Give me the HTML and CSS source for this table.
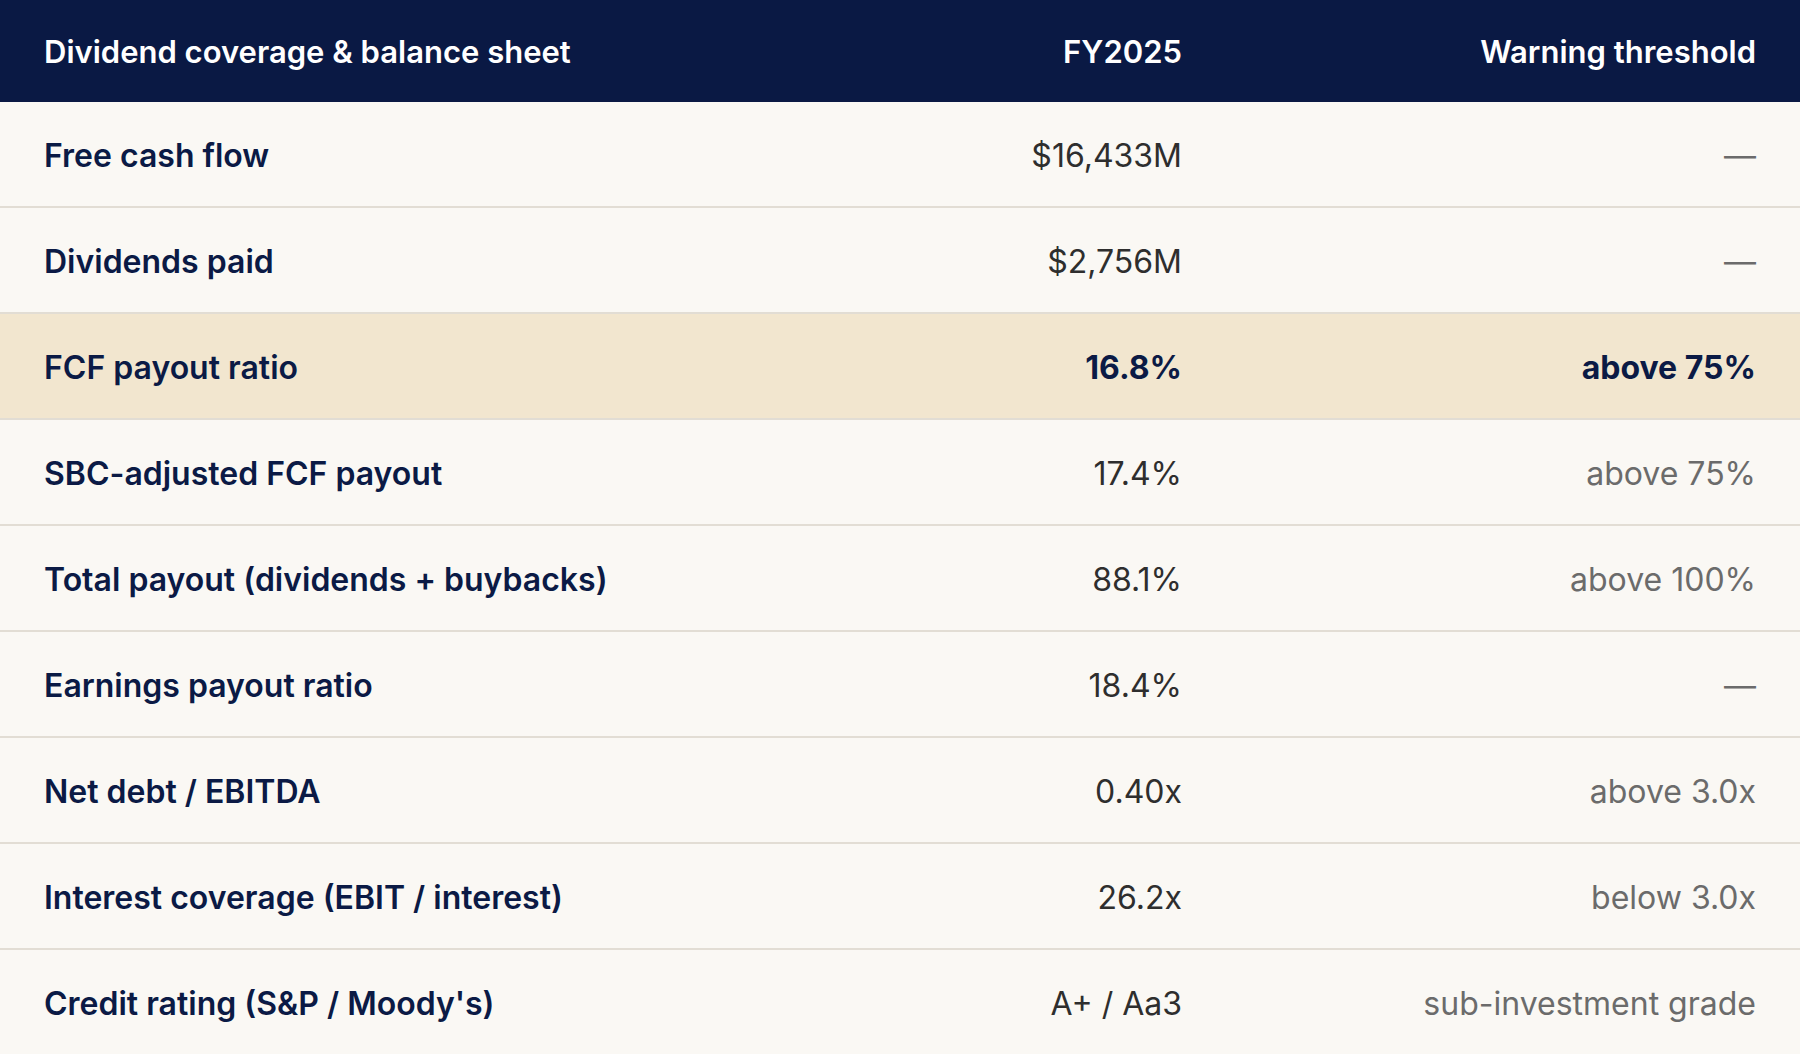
FILE: index.html
```html
<!DOCTYPE html>
<html lang="en">
<head>
<meta charset="utf-8">
<title>Dividend coverage &amp; balance sheet</title>
<link rel="stylesheet" href="styles.css">
</head>
<body>
<div class="table">
  <div class="row head">
    <div class="cell label">Dividend coverage &amp; balance sheet</div>
    <div class="cell value">FY2025</div>
    <div class="cell thr">Warning threshold</div>
  </div>
  <div class="row">
    <div class="cell label">Free cash flow</div>
    <div class="cell value">$16,433M</div>
    <div class="cell thr">—</div>
  </div>
  <div class="row">
    <div class="cell label">Dividends paid</div>
    <div class="cell value">$2,756M</div>
    <div class="cell thr">—</div>
  </div>
  <div class="row hl">
    <div class="cell label">FCF payout ratio</div>
    <div class="cell value">16.8%</div>
    <div class="cell thr">above 75%</div>
  </div>
  <div class="row">
    <div class="cell label">SBC-adjusted FCF payout</div>
    <div class="cell value">17.4%</div>
    <div class="cell thr">above 75%</div>
  </div>
  <div class="row">
    <div class="cell label">Total payout (dividends + buybacks)</div>
    <div class="cell value">88.1%</div>
    <div class="cell thr">above 100%</div>
  </div>
  <div class="row">
    <div class="cell label">Earnings payout ratio</div>
    <div class="cell value">18.4%</div>
    <div class="cell thr">—</div>
  </div>
  <div class="row">
    <div class="cell label">Net debt / EBITDA</div>
    <div class="cell value">0.40x</div>
    <div class="cell thr">above 3.0x</div>
  </div>
  <div class="row">
    <div class="cell label">Interest coverage (EBIT / interest)</div>
    <div class="cell value">26.2x</div>
    <div class="cell thr">below 3.0x</div>
  </div>
  <div class="row last">
    <div class="cell label">Credit rating (S&amp;P / Moody's)</div>
    <div class="cell value">A+ / Aa3</div>
    <div class="cell thr">sub-investment grade</div>
  </div>
</div>
</body>
</html>
```
FILE: styles.css
```css
html, body {
  margin: 0;
  padding: 0;
  background: #faf8f4;
}
body {
  font-family: Inter, "Noto Sans", "Liberation Sans", sans-serif;
  font-size: 32px;
}
.table {
  width: 1800px;
  display: flex;
  flex-direction: column;
}
.row {
  box-sizing: border-box;
  display: grid;
  grid-template-columns: 1fr 300px 574px;
  height: 106px;
  padding-top: 3px;
  border-bottom: 2px solid #e2ddd4;
  background: #faf8f4;
  align-items: center;
}
.row.last {
  border-bottom: none;
  height: 104px;
}
.row.head {
  height: 102px;
  padding-top: 0;
  border-bottom: none;
  background: #0a1944;
  font-size: 31px;
}
.cell {
  padding: 0 44px;
}
.label {
  font-weight: 600;
  color: #0b1a45;
}
.value {
  text-align: right;
  color: #2e2e2e;
}
.thr {
  text-align: right;
  color: #6b6b6b;
}
.head .label, .head .value, .head .thr {
  color: #ffffff;
  font-weight: 600;
}
.row.hl {
  background: #f2e6cf;
}
.hl .value, .hl .thr {
  color: #0b1a45;
  font-weight: 700;
}
```
